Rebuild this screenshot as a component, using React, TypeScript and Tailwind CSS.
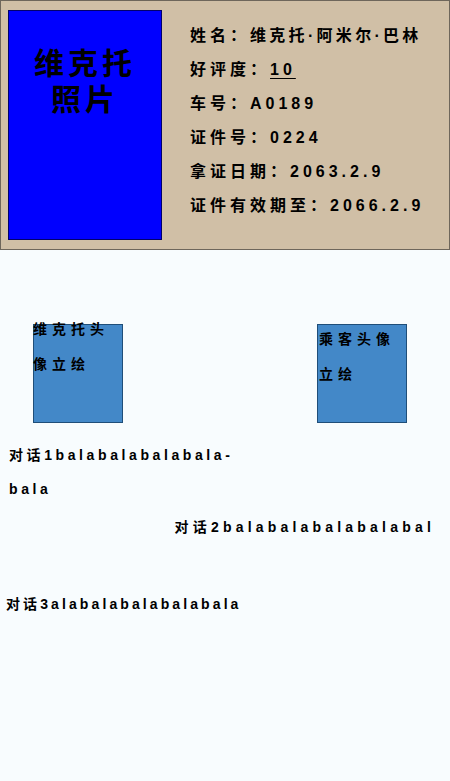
export default function App() {
  const font = 'font-["Liberation_Sans","Noto_Sans_CJK_SC",sans-serif] font-bold text-black';

  return (
    <div className={`min-h-screen w-[450px] bg-[#f8fcfe] ${font}`}>
      {/* 证件卡片 */}
      <div className="flex h-[250px] border border-[#6e665b] bg-[#d0bfa6]">
        <div className="ml-[7px] mt-[9px] h-[230px] w-[154px] shrink-0 border border-[#00006b] bg-[#0000ff] pt-[35px] text-center text-[30px] font-semibold leading-[36px] tracking-[4px]">
          维克托
          <br />
          照片
        </div>
        <div className="ml-[28px] flex flex-col pt-[18px] text-[16px] leading-[34px] tracking-[4px] whitespace-nowrap">
          <div>
            姓名：<span className="tracking-[3.3px]">维克托·阿米尔·巴林</span>
          </div>
          <div>
            好评度：<span className="underline underline-offset-[3px] decoration-1">10</span>
          </div>
          <div>车号：A0189</div>
          <div>证件号：0224</div>
          <div>拿证日期：2063.2.9</div>
          <div>证件有效期至：2066.2.9</div>
        </div>
      </div>

      {/* 头像立绘 */}
      <div className="mt-[74px] flex justify-between pl-[33px] pr-[43px] text-[14px] leading-[35px] tracking-[5px]">
        <div className="h-[99px] w-[90px] border border-[#1f4e79] bg-[#4388c8]">
          <div className="-ml-px -mt-[13px]">维克托头像立绘</div>
        </div>
        <div className="h-[99px] w-[90px] border border-[#1f4e79] bg-[#4388c8]">
          <div className="-mt-[3px] ml-px">乘客头像立绘</div>
        </div>
      </div>

      {/* 对话 */}
      <div className="mt-[15px] flex flex-col text-[14px] leading-[34px]">
        <div className="ml-[9px] w-[240px] tracking-[3.6px]">对话1balabalabalabala-bala</div>
        <div className="mt-[4px] pr-[15px] text-right whitespace-nowrap tracking-[4.2px]">对话2balabalabalabalabal</div>
        <div className="ml-[6px] mt-[43px] whitespace-nowrap tracking-[3.1px]">对话3alabalabalabalabala</div>
      </div>
    </div>
  );
}
